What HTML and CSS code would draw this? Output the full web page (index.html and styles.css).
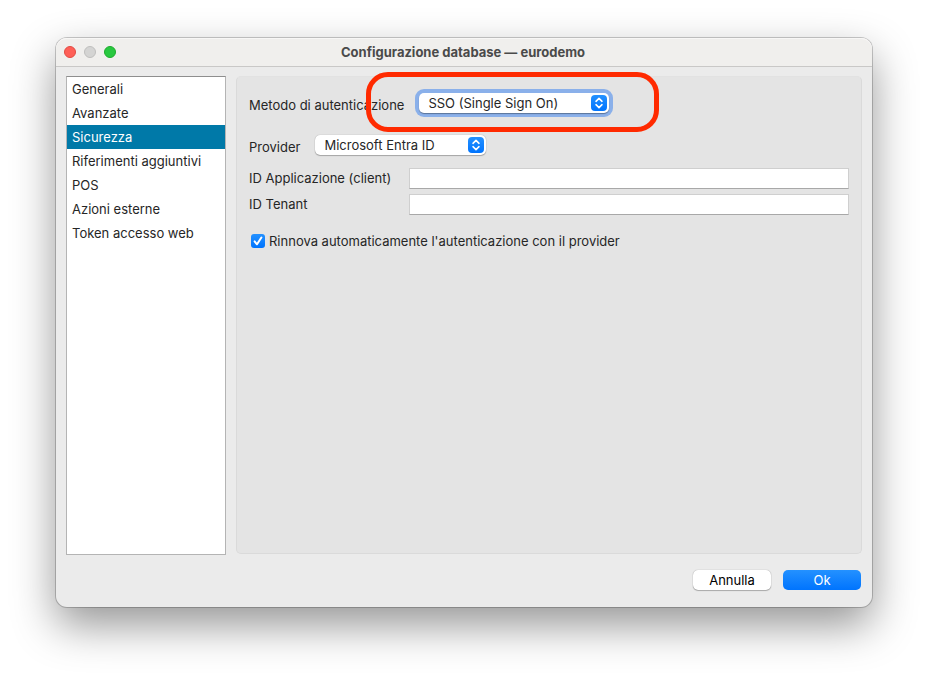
FILE: index.html
```html
<!DOCTYPE html>
<html lang="it">
<head>
<meta charset="utf-8">
<title>Configurazione database — eurodemo</title>
<link rel="stylesheet" href="styles.css">
</head>
<body>
<main class="window">
  <header class="titlebar">
    <div class="lights">
      <button class="light close" type="button" aria-label="Chiudi"></button>
      <button class="light minimize" type="button" aria-label="Riduci" disabled></button>
      <button class="light zoom" type="button" aria-label="Ingrandisci"></button>
    </div>
    <h1 class="title">Configurazione database — eurodemo</h1>
  </header>
  <form class="content">
    <div class="columns">
      <nav class="sidebar">
        <a href="#generali">Generali</a>
        <a href="#avanzate">Avanzate</a>
        <a href="#sicurezza" class="selected" aria-current="page">Sicurezza</a>
        <a href="#riferimenti">Riferimenti aggiuntivi</a>
        <a href="#pos">POS</a>
        <a href="#azioni">Azioni esterne</a>
        <a href="#token">Token accesso web</a>
      </nav>
      <section class="panel">
        <div class="choice">
          <label for="method">Metodo di autenticazione</label>
          <div class="popup popup-wide focused">
            <select id="method"><option>SSO (Single Sign On)</option></select>
            <svg class="arrows" viewBox="0 0 16 16" aria-hidden="true"><path d="M5 6.3 8 3.4l3 2.9M5 9.7l3 2.9 3-2.9"/></svg>
          </div>
          <div class="highlight"></div>
        </div>
        <div class="choice">
          <label for="provider">Provider</label>
          <div class="popup">
            <select id="provider"><option>Microsoft Entra ID</option></select>
            <svg class="arrows" viewBox="0 0 16 16" aria-hidden="true"><path d="M5 6.3 8 3.4l3 2.9M5 9.7l3 2.9 3-2.9"/></svg>
          </div>
        </div>
        <div class="fields">
          <label for="client">ID Applicazione (client)</label>
          <input id="client" type="text">
          <label for="tenant">ID Tenant</label>
          <input id="tenant" type="text">
        </div>
        <label class="check">
          <input type="checkbox" checked>
          <svg class="tick" viewBox="0 0 14 14" aria-hidden="true"><path d="M3.6 7.4 6 10.3l4.4-6.8"/></svg>
          <span>Rinnova automaticamente l'autenticazione con il provider</span>
        </label>
      </section>
    </div>
    <footer class="actions">
      <button class="button" type="button">Annulla</button>
      <button class="button primary" type="button">Ok</button>
    </footer>
  </form>
</main>
</body>
</html>
```

FILE: styles.css
```css
* {
  box-sizing: border-box;
}

body {
  margin: 0;
  padding: 38px 56px 74px;
  min-height: 100vh;
  display: flex;
  background: #fff;
  color: #262626;
  font: 13px/20px Inter, "Liberation Sans", sans-serif;
}

button,
input,
select {
  font: inherit;
  color: inherit;
  margin: 0;
}

.window {
  flex: 1;
  display: flex;
  flex-direction: column;
  border-radius: 11px;
  background: #ebebeb;
  box-shadow: 0 0 0 1px rgba(0, 0, 0, 0.2), 0 18px 44px rgba(0, 0, 0, 0.42);
}

.titlebar {
  display: grid;
  grid-template-columns: 1fr auto 1fr;
  align-items: center;
  height: 29px;
  padding: 0 10px 0 8px;
  border-bottom: 1px solid #c9c8c7;
  border-radius: 11px 11px 0 0;
  background: #f0efed;
  box-shadow: inset 0 1px #f8f7f6;
}

.lights {
  display: flex;
  gap: 8px;
}

.light {
  width: 12px;
  height: 12px;
  padding: 0;
  border: 1px solid;
  border-radius: 50%;
}

.close {
  background: #fe5f57;
  border-color: #e24b42;
}

.minimize {
  background: #d4d4d3;
  border-color: #bfbfbe;
}

.zoom {
  background: #28c840;
  border-color: #1dac2c;
}

.title {
  margin: 0;
  font-size: 13px;
  font-weight: 700;
  color: #4a4a4a;
}

.content {
  flex: 1;
  display: flex;
  flex-direction: column;
  padding: 9px 10px 17px;
}

.columns {
  flex: 1;
  display: grid;
  grid-template-columns: 160px 1fr;
  gap: 10px;
}

.sidebar {
  border: 1px solid #b4b4b4;
  border-top-color: #8e8e8e;
  background: #fff;
}

.sidebar a {
  display: block;
  padding: 0 5px;
  line-height: 24px;
  color: inherit;
  text-decoration: none;
}

.sidebar .selected {
  background: #0079a8;
  color: #fff;
}

.panel {
  margin-bottom: 1px;
  padding: 16px 12px;
  border: 1px solid #dadada;
  border-top-color: #e2e2e2;
  border-radius: 5px;
  background: #e4e4e4;
}

.choice {
  position: relative;
  display: flex;
  gap: 15px;
  height: 21px;
  margin-bottom: 21px;
}

.choice + .choice {
  margin-bottom: 12px;
}

.choice label {
  padding-top: 2px;
}

.popup {
  position: relative;
  width: 171px;
}

.popup-wide {
  width: 190px;
}

.popup select {
  display: block;
  appearance: none;
  width: 100%;
  height: 20px;
  padding: 0 28px 0 9px;
  border: 0;
  border-radius: 5px;
  outline: 0;
  background: #fff;
  box-shadow: 0 0 1px rgba(0, 0, 0, 0.35), 0 1px 1px rgba(0, 0, 0, 0.25);
}

.focused select {
  box-shadow: 0 1px 1px rgba(0, 0, 0, 0.35), 0 0 0 4px #8ab0ea;
}

.arrows {
  position: absolute;
  top: 2px;
  right: 2px;
  width: 16px;
  height: 16px;
  border-radius: 4px;
  background: linear-gradient(#2491ff, #0074fe);
  pointer-events: none;
}

.arrows path,
.tick path {
  fill: none;
  stroke: #fff;
  stroke-width: 1.6;
  stroke-linecap: round;
  stroke-linejoin: round;
}

.highlight {
  position: absolute;
  top: -21px;
  left: 117px;
  width: 293px;
  height: 60px;
  border: 5px solid #ff2a00;
  border-radius: 22px;
  pointer-events: none;
}

.fields {
  display: grid;
  grid-template-columns: 160px 1fr;
  row-gap: 5px;
  margin-bottom: 16px;
}

.fields input {
  width: 100%;
  height: 21px;
  padding: 0 4px;
  border: 1px solid #cfcfcf;
  border-bottom-color: #a8a8a8;
  border-radius: 0;
  outline: 0;
  background: #fff;
}

.check {
  position: relative;
  display: flex;
  align-items: center;
  gap: 4px;
  padding-left: 2px;
}

.check input {
  appearance: none;
  width: 14px;
  height: 14px;
  border-radius: 3px;
  background: linear-gradient(#2491ff, #0074fe);
}

.tick {
  position: absolute;
  left: 2px;
  width: 14px;
  height: 14px;
  pointer-events: none;
}

.tick path {
  stroke-width: 2;
}

.actions {
  display: flex;
  justify-content: flex-end;
  gap: 12px;
  padding: 15px 1px 0 0;
}

.button {
  width: 78px;
  height: 20px;
  padding: 0;
  border: 0;
  border-radius: 5px;
  background: #fff;
  color: #000;
  box-shadow: 0 0 1px rgba(0, 0, 0, 0.4), 0 1px 1px rgba(0, 0, 0, 0.25);
}

.primary {
  background: linear-gradient(#2491ff, #0074fe);
  color: #fff;
  box-shadow: none;
}
```
